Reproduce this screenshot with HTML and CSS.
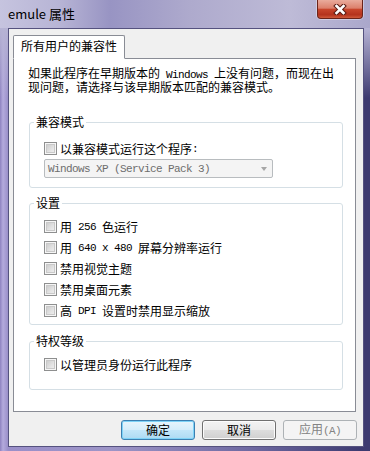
FILE: index.html
```html
<!doctype html>
<html>
<head>
<meta charset="utf-8">
<title>emule 属性</title>
<link rel="stylesheet" href="styles.css">
</head>
<body>

<div class="window">
	<div class="titleBar">
		<span class="title">emule 属性</span>
		<button class="closeButton">
			<svg width="14" height="11" viewBox="0 0 14 11">
				<path d="M3.5 2 L10.5 9 M10.5 2 L3.5 9" stroke="#5a1c14" stroke-width="4.6" stroke-linecap="square"/>
				<path d="M3.5 2 L10.5 9 M10.5 2 L3.5 9" stroke="#ffffff" stroke-width="2.6" stroke-linecap="square"/>
			</svg>
		</button>
	</div>

	<div class="frame">
		<div class="client">
			<div class="tabs">
				<div class="tab">所有用户的兼容性</div>
			</div>

			<div class="tabPage">
				<p class="intro">如果此程序在早期版本的<span class="mono"> Windows </span>上没有问题，而现在出现问题，请选择与该早期版本匹配的兼容模式。</p>

				<fieldset class="group">
					<legend>兼容模式</legend>
					<div class="groupBody compat">
						<label class="option"><span class="check"></span>以兼容模式运行这个程序<span class="mono">:</span></label>
						<div class="combo">
							<span class="mono">Windows XP (Service Pack 3)</span>
							<span class="arrow"></span>
						</div>
					</div>
				</fieldset>

				<fieldset class="group settings">
					<legend>设置</legend>
					<div class="groupBody">
						<label class="option row"><span class="check"></span>用<span class="mono"> 256 </span>色运行</label>
						<label class="option row"><span class="check"></span>用<span class="mono"> 640 x 480 </span>屏幕分辨率运行</label>
						<label class="option row"><span class="check"></span>禁用视觉主题</label>
						<label class="option row"><span class="check"></span>禁用桌面元素</label>
						<label class="option row"><span class="check"></span>高<span class="mono"> DPI </span>设置时禁用显示缩放</label>
					</div>
				</fieldset>

				<fieldset class="group privilege">
					<legend>特权等级</legend>
					<div class="groupBody">
						<label class="option row"><span class="check"></span>以管理员身份运行此程序</label>
					</div>
				</fieldset>
			</div>

			<div class="buttons">
				<button class="btn default">确定</button>
				<button class="btn">取消</button>
				<button class="btn disabled">应用<span class="mono">(A)</span></button>
			</div>
		</div>
	</div>
</div>

</body>
</html>
```

FILE: styles.css
```css
body {
	margin: 0px;
	font-family: "Noto Sans CJK SC", sans-serif;
	font-size: 12px;
	color: #000;
}
.mono {
	font-family: "Liberation Mono", monospace;
	font-size: 11px;
	letter-spacing: -0.6px;
}
.window {
	width: 370px;
	height: 451px;
	overflow: hidden;
}
.titleBar {
	display: flex;
	align-items: flex-start;
	height: 28px;
	padding-left: 8px;
	background: linear-gradient(to right, #c6c4df 0px, #b7b4d5 60px, #9894c3 110px, #aeaacd 190px, #bebbd7 290px, #aaa7cb 370px);
}
.title {
	line-height: 28px;
	font-size: 13px;
}
.closeButton {
	display: flex;
	align-items: center;
	justify-content: center;
	margin-left: auto;
	margin-right: 7px;
	width: 46px;
	height: 19px;
	padding: 0px;
	border: 1px solid #6b2319;
	border-top: none;
	border-radius: 0px 0px 4px 4px;
	background: linear-gradient(#e9ab9c 0%, #dc806c 45%, #c8452c 52%, #b4331d 82%, #cf5a3c 100%);
	box-shadow: 0px 0px 0px 1px rgba(255, 255, 255, 0.35);
}
.frame {
	padding: 0px 6px 6px 8px;
	background:
		linear-gradient(rgba(182, 179, 212, 1), rgba(182, 179, 212, 0) 70px),
		linear-gradient(to right, #8e82c0, #b4aadd 3px, #9a8fc9 8px, #9d95c7 110px, #6e69a1 250px, #3d3a70 362px);
}
.client {
	background-color: #f0f0f0;
	border: 1px solid #55527f;
}
.tabs {
	display: flex;
	padding: 6px 0px 0px 4px;
}
.tab {
	position: relative;
	margin-bottom: -1px;
	padding: 0px 7px 2px 7px;
	line-height: 20px;
	background-color: #fff;
	border: 1px solid #898c95;
	border-bottom: 1px solid #fff;
	border-radius: 2px 2px 0px 0px;
}
.tabPage {
	margin: 0px 7px 0px 4px;
	padding: 0px 0px 21px 14px;
	background-color: #fff;
	border: 1px solid #898c95;
}
.intro {
	width: 312px;
	margin: 8px 0px 0px 0px;
	line-height: 12px;
}
.group {
	box-sizing: border-box;
	width: 314px;
	margin: 23px 0px 0px 1px;
	padding: 0px;
	border: 1px solid #d5dfe5;
	border-radius: 3px;
	min-inline-size: 0px;
}
.group legend {
	margin-left: 4px;
	padding: 0px 2px;
	line-height: 12px;
}
.settings {
	margin-top: 9px;
}
.privilege {
	margin-top: 10px;
}
.groupBody {
	padding: 7px 0px 3px 14px;
}
.compat {
	padding: 12px 0px 9px 14px;
}
.privilege .groupBody {
	padding-bottom: 14px;
}
.option {
	display: flex;
	align-items: center;
	height: 17px;
	white-space: pre;
}
.option.row {
	height: 21px;
}
.check {
	box-sizing: border-box;
	width: 13px;
	height: 13px;
	margin-right: 3px;
	border: 1px solid #8e8f8f;
	background: linear-gradient(135deg, #c4c4c4, #e4e4e4 60%, #f2f2f2);
	box-shadow: inset 0px 0px 0px 1px #f6f6f6, inset 0px 0px 0px 2px #c9c9c9;
}
.combo {
	box-sizing: border-box;
	display: flex;
	align-items: center;
	width: 229px;
	height: 19px;
	margin-top: 2px;
	padding-left: 3px;
	color: #6d6d6d;
	background-color: #f4f4f4;
	border: 1px solid #b8bcbf;
	border-radius: 2px;
	white-space: pre;
}
.arrow {
	margin-left: auto;
	margin-right: 5px;
	border-left: 3px solid transparent;
	border-right: 3px solid transparent;
	border-top: 4px solid #a6a6a6;
}
.buttons {
	display: flex;
	justify-content: flex-end;
	gap: 7px;
	padding: 8px 6px 6px 0px;
}
.btn {
	box-sizing: border-box;
	width: 74px;
	height: 20px;
	padding: 0px;
	font-family: "Noto Sans CJK SC", sans-serif;
	font-size: 12px;
	line-height: 16px;
	color: #000;
	border: 1px solid #707070;
	border-radius: 3px;
	background: linear-gradient(#f3f3f3 0%, #ebebeb 48%, #dddddd 52%, #cfcfcf 100%);
	box-shadow: inset 0px 0px 0px 1px #fcfcfc;
}
.btn.default {
	border-color: #3c7fb1;
	background: linear-gradient(#e8f5fc 0%, #d6eefb 48%, #c3e6f9 52%, #addaf3 100%);
	box-shadow: inset 0px 0px 0px 1px #7fd3f7;
}
.btn.disabled {
	color: #838383;
	border-color: #adb2b5;
	background: #f4f4f4;
	box-shadow: none;
}
```
